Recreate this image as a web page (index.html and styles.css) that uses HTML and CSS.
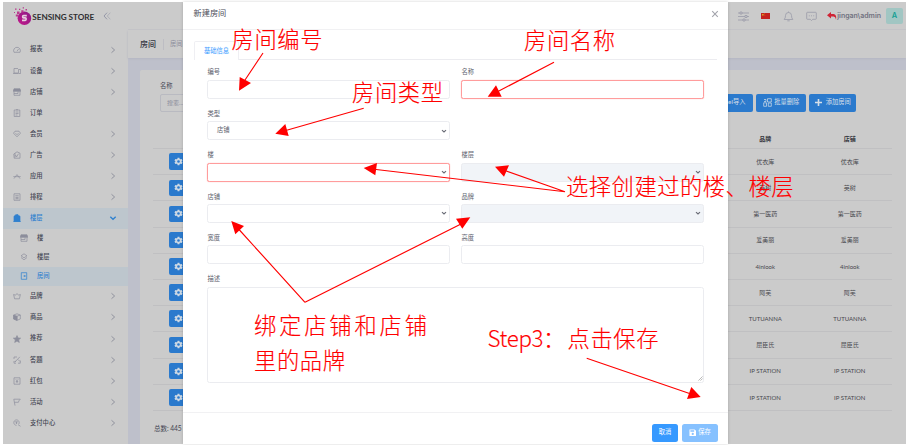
FILE: index.html
```html
<!DOCTYPE html>
<html lang="zh-CN">
<head>
<meta charset="utf-8">
<title>新建房间</title>
<link rel="stylesheet" href="styles.css">
</head>
<body>
<svg class="defs" aria-hidden="true">
  <symbol id="chev" viewBox="0 0 8 8"><path d="M2.5 1.3 5.6 4 2.5 6.7"/></symbol>
  <symbol id="down" viewBox="0 0 8 8"><path d="M1.3 2.8 4 5.3 6.7 2.8"/></symbol>
  <symbol id="gauge" viewBox="0 0 8 8"><path d="M1 6.3A3.4 3.4 0 1 1 7 6.3ZM4 5.2 5.6 3"/></symbol>
  <symbol id="device" viewBox="0 0 8 8"><path d="M5 1.5H1V6H5M0 6.5H5M5.5 2.5H7.6V6.5H5.5Z"/></symbol>
  <symbol id="shop" viewBox="0 0 8 8"><path fill="currentColor" d="M1 .8H7L7.8 3.3H.2Z"/><path d="M1 3.5V7.3H7V3.5M1 5.5H5V3.5"/></symbol>
  <symbol id="order" viewBox="0 0 8 8"><path d="M1.2 1H6.8V7.5H1.2ZM3 .7H5M2.5 3H5.5M2.5 4.5H5.5M2.5 6H4.5"/></symbol>
  <symbol id="gem" viewBox="0 0 8 8"><path d="M2 1.2H6L7.5 3.2 4 6.8.5 3.2ZM2.5 3.2 4 4.7 5.5 3.2"/></symbol>
  <symbol id="ad" viewBox="0 0 8 8"><path d="M.8 3 4 .8 7 2.2V7.2H1.2ZM2.5 4 3.5 6 5.5 2.7M2 2.3V6.5"/></symbol>
  <symbol id="app" viewBox="0 0 8 8"><path d="M.3 4.6H7.7M1 6.6 2.6 4.4 4 2.6 5.4 4.4 7 6.6"/></symbol>
  <symbol id="plan" viewBox="0 0 8 8"><path d="M1 .8H7V7.3H1ZM2.3 2.7H5.7M2.3 4.3H5.7M2.3 5.8H5.7M4 4V6"/></symbol>
  <symbol id="tower" viewBox="0 0 8 8"><path fill="currentColor" d="M1 2.2 2.3 1.6V.9L4.8.4 5.4 1.6 7 2.2V7.5H1Z"/><path d="M.3 7.5H7.8"/></symbol>
  <symbol id="layers" viewBox="0 0 8 8"><path d="M4 .8 7 2.8 4 4.8 1 2.8ZM1 4.5 4 6.8 7 4.5"/></symbol>
  <symbol id="door" viewBox="0 0 8 8"><path d="M1.3.7H6.7V7.3H1.3ZM3.8 4H6M4.7 3.1 3.8 4 4.7 4.9"/></symbol>
  <symbol id="crown" viewBox="0 0 8 8"><path d="M1.6 6.8.6 2.5 2.5 3.2 4 1.5 5.5 3.2 7.4 2.5 6.4 6.8Z"/></symbol>
  <symbol id="box" viewBox="0 0 8 8"><path d="M4 .8 7.3 2V6L4 7.3.7 6V2ZM4 3.2V7.3M4 3.2 7.3 2"/><path fill="currentColor" d="M.7 2 4 3.2V7.3L.7 6Z"/></symbol>
  <symbol id="star" viewBox="0 0 8 8"><path fill="currentColor" d="M4 .6 5 3 7.6 3.2 5.6 4.8 6.3 7.4 4 6 1.7 7.4 2.4 4.8.4 3.2 3 3Z"/></symbol>
  <symbol id="quiz" viewBox="0 0 8 8"><path d="M1 3V1H4M1 5V7.2H3M5 7.2H7.3V4.5M2 6 6.8.9M2 6 2.3 4.8M5 3.5 7 5.5"/></symbol>
  <symbol id="packet" viewBox="0 0 8 8"><path d="M1 .8H7V7.2H1ZM2.8 2.3 4 3.8 5.2 2.3M4 3.8V6M2.8 4.6H5.2"/></symbol>
  <symbol id="flag" viewBox="0 0 8 8"><path d="M2 7.6 .8 1.2H7.3L6 2.7 5.4 4.3H1.5"/></symbol>
  <symbol id="pay" viewBox="0 0 8 8"><path d="M5.8 5A2.7 2.7 0 1 0 3.5 6.3M5 5.6 7.5 7.3M2.5 2 3.5 3.3 4.5 2M3.5 3.3V5M2.6 3.8H4.4"/></symbol>
  <symbol id="gear" viewBox="0 0 10 10"><path fill="currentColor" stroke="none" fill-rule="evenodd" d="M4 .8H6L6.3 2.1 7.2 2.6 8.5 2.2 9.5 3.9 8.5 4.8V5.3L9.5 6.1 8.5 7.8 7.2 7.4 6.3 7.9 6 9.2H4L3.7 7.9 2.8 7.4 1.5 7.8.5 6.1 1.5 5.3V4.8L.5 3.9 1.5 2.2 2.8 2.6 3.7 2.1ZM5 3.5A1.5 1.5 0 1 0 5 6.5 1.5 1.5 0 1 0 5 3.5Z"/></symbol>
</svg>

<div class="app">
  <aside class="side">
    <div class="brand">
      <svg class="mark" viewBox="0 0 18 19"><defs><linearGradient id="g" x1="0" y1="1" x2="1" y2="0"><stop offset="0" stop-color="#c2188a"/><stop offset="1" stop-color="#8b1b87"/></linearGradient></defs>
        <circle cx="10.4" cy="11.8" r="6.8" fill="url(#g)"/>
        <path fill="#b93a8e" d="M3 5H5.5V7.5H3ZM1 2H2.5V3.3H1ZM5 2.2H6.3V3.5H5ZM7.3 3.8H9.5V6H7.3ZM8.7.8H10V2H8.7ZM11.5 2.5H13V4H11.5ZM1.8 8H4.5V10H1.8ZM0 5.5H1V6.5H0Z"/>
        <path fill="none" stroke="#e6d0e0" stroke-width="1.6" d="M12.8 9.1H9.6Q8.6 9.1 8.6 10.2T9.6 11.4H11.2Q12.2 11.4 12.2 12.6T11.2 13.9H8"/></svg>
      <span class="name">SENSING STORE</span>
      <svg class="fold" viewBox="0 0 8 8"><path d="M4 .7 1 4 4 7.3"/><path class="faint" d="M7.3.7 4.3 4 7.3 7.3"/></svg>
    </div>
    <nav>
      <div class="item"><svg><use href="#gauge"/></svg><span>报表</span><svg class="go"><use href="#chev"/></svg></div>
      <div class="item"><svg><use href="#device"/></svg><span>设备</span><svg class="go"><use href="#chev"/></svg></div>
      <div class="item"><svg><use href="#shop"/></svg><span>店铺</span><svg class="go"><use href="#chev"/></svg></div>
      <div class="item"><svg><use href="#order"/></svg><span>订单</span></div>
      <div class="item"><svg><use href="#gem"/></svg><span>会员</span><svg class="go"><use href="#chev"/></svg></div>
      <div class="item"><svg><use href="#ad"/></svg><span>广告</span><svg class="go"><use href="#chev"/></svg></div>
      <div class="item"><svg><use href="#app"/></svg><span>应用</span><svg class="go"><use href="#chev"/></svg></div>
      <div class="item"><svg><use href="#plan"/></svg><span>排程</span><svg class="go"><use href="#chev"/></svg></div>
      <div class="item on"><svg><use href="#tower"/></svg><span>楼层</span><svg class="go"><use href="#down"/></svg></div>
      <div class="item sub"><svg><use href="#shop"/></svg><span>楼</span></div>
      <div class="item sub"><svg><use href="#layers"/></svg><span>楼层</span></div>
      <div class="item sub on"><svg><use href="#door"/></svg><span>房间</span></div>
      <div class="item"><svg><use href="#crown"/></svg><span>品牌</span><svg class="go"><use href="#chev"/></svg></div>
      <div class="item"><svg><use href="#box"/></svg><span>商品</span><svg class="go"><use href="#chev"/></svg></div>
      <div class="item"><svg><use href="#star"/></svg><span>推荐</span><svg class="go"><use href="#chev"/></svg></div>
      <div class="item"><svg><use href="#quiz"/></svg><span>答题</span><svg class="go"><use href="#chev"/></svg></div>
      <div class="item"><svg><use href="#packet"/></svg><span>红包</span><svg class="go"><use href="#chev"/></svg></div>
      <div class="item"><svg><use href="#flag"/></svg><span>活动</span><svg class="go"><use href="#chev"/></svg></div>
      <div class="item"><svg><use href="#pay"/></svg><span>支付中心</span><svg class="go"><use href="#chev"/></svg></div>
    </nav>
  </aside>
  <div class="main">
    <header class="top">
      <svg class="ic" viewBox="0 0 11 11"><path d="M0 2H11M0 5.5H11M0 9H11"/><path class="knob" d="M2 1H4V3H2ZM7 4.5H9V6.5H7ZM5 8H7V10H5Z"/></svg>
      <svg class="cn" viewBox="0 0 9 6"><path fill="#c5221f" d="M0 0H9V6H0Z"/><path fill="#d9a520" d="M1 1H2.6V2.6H1ZM3.4.6H4V1.2H3.4ZM3.6 2H4.2V2.6H3.6Z"/></svg>
      <svg class="ic" viewBox="0 0 11 11"><path d="M1.2 8.5H9.8Q8.5 7 8.5 4.5A3 3 0 0 0 2.5 4.5Q2.5 7 1.2 8.5ZM4.3 9.8H6.7M5.5.5V1.5"/></svg>
      <svg class="ic" viewBox="0 0 11 11"><path d="M1.5 1.3H9.5Q10.3 1.3 10.3 2V7.5Q10.3 8.3 9.5 8.3H6.7L5.5 9.6 4.3 8.3H1.5Q.7 8.3.7 7.5V2Q.7 1.3 1.5 1.3ZM2.8 4.8H3.8M5 4.8H6M7.2 4.8H8.2"/></svg>
      <span class="user"><svg viewBox="0 0 10 8"><path fill="#cf2435" d="M0 3.2 4 0V2H6.5Q10 2.5 9 7.6 8.5 4.8 6.5 4.6H4V6.5Z"/></svg>jingan\admin</span>
      <span class="avatar">A</span>
    </header>
    <div class="crumb"><b>房间</b><span>房间</span></div>
    <section class="card">
      <div class="query">
        <div class="find"><label>名称</label><div class="search">搜索...</div></div>
        <div class="acts">
          <span class="btn wide">Excel导入</span>
          <span class="btn bulk"><svg viewBox="0 0 9 9"><path d="M4.5.7H8.3V4H4.5ZM.7 4.8H3.5V8.3H.7ZM5.3 5H8.3V8.3H5.3ZM1 1.5H3V3.5H1"/></svg>批量删除</span>
          <span class="btn add"><svg viewBox="0 0 9 9"><path class="thick" d="M4.5 1V8M1 4.5H8"/></svg>添加房间</span>
        </div>
      </div>
      <div class="table">
        <div class="row head"><span></span><span></span><span>品牌</span><span>店铺</span></div>
        <div class="row"><i><svg><use href="#gear"/></svg></i><span></span><span>优衣库</span><span>优衣库</span></div>
        <div class="row"><i><svg><use href="#gear"/></svg></i><span></span><span>英树</span><span>英树</span></div>
        <div class="row"><i><svg><use href="#gear"/></svg></i><span></span><span>第一医药</span><span>第一医药</span></div>
        <div class="row"><i><svg><use href="#gear"/></svg></i><span></span><span>爱美丽</span><span>爱美丽</span></div>
        <div class="row"><i><svg><use href="#gear"/></svg></i><span></span><span>4inlook</span><span>4inlook</span></div>
        <div class="row"><i><svg><use href="#gear"/></svg></i><span></span><span>阿芙</span><span>阿芙</span></div>
        <div class="row"><i><svg><use href="#gear"/></svg></i><span></span><span>TUTUANNA</span><span>TUTUANNA</span></div>
        <div class="row"><i><svg><use href="#gear"/></svg></i><span></span><span>屈臣氏</span><span>屈臣氏</span></div>
        <div class="row"><i><svg><use href="#gear"/></svg></i><span></span><span>IP STATION</span><span>IP STATION</span></div>
        <div class="row"><i><svg><use href="#gear"/></svg></i><span></span><span>IP STATION</span><span>IP STATION</span></div>
      </div>
      <div class="total">总数: 445</div>
    </section>
  </div>
</div>

<div class="modal">
  <div class="mhead"><span>新建房间</span><svg viewBox="0 0 8 8"><path d="M1.2 1.2 6.8 6.8M6.8 1.2 1.2 6.8"/></svg></div>
  <div class="mbody">
    <div class="tabs"><span class="tab">基础信息</span></div>
    <div class="form">
      <div class="field"><label>编号</label><div class="ctl"></div></div>
      <div class="field"><label>名称</label><div class="ctl bad"></div></div>
      <div class="field first"><label>类型</label><div class="ctl">店铺<svg><use href="#down"/></svg></div></div>
      <div class="field"><label>楼</label><div class="ctl bad"><svg><use href="#down"/></svg></div></div>
      <div class="field"><label>楼层</label><div class="ctl off"><svg><use href="#down"/></svg></div></div>
      <div class="field"><label>店铺</label><div class="ctl"><svg><use href="#down"/></svg></div></div>
      <div class="field"><label>品牌</label><div class="ctl off"><svg><use href="#down"/></svg></div></div>
      <div class="field"><label>宽度</label><div class="ctl"></div></div>
      <div class="field"><label>高度</label><div class="ctl"></div></div>
      <div class="field full"><label>描述</label><div class="ctl area"><svg viewBox="0 0 6 6"><path d="M.5 5.5 5.5.5M3 5.5 5.5 3"/></svg></div></div>
    </div>
  </div>
  <div class="mfoot">
    <span class="mb cancel">取消</span>
    <span class="mb save"><svg viewBox="0 0 8 8"><path fill="#fff" fill-rule="evenodd" d="M.5.5H6L7.5 2V7.5H.5ZM1.5 1.3V3H5.5V1.3ZM4 4A1.2 1.2 0 1 0 4 6.4 1.2 1.2 0 1 0 4 4Z"/></svg>保存</span>
  </div>
</div>

<svg class="notes" viewBox="0 0 908 445">
  <g class="lines">
    <path d="M263 53 243 83M363.7 108.3 284 131M554 62.3 496 92.5M565 191.7 374 169.3M565 191.7 505 170.5M305 302.3 239 229.5M305 302.3 463 223M586.7 358.3 691 394"/>
  </g>
  <path class="heads" d="M239.7 77 251 83 239 90.7ZM285.3 124 288.7 136 275.3 133.7ZM496 85.3 501.7 96.7H487.7ZM363.7 168 377 163 375.3 175.3ZM495 166.7 509 165.3 504 176.7ZM231.3 221 244 226 235.3 234.3ZM456 218.7 470.3 217.3 462.3 228.7ZM691.3 387 700.7 397 687 399Z"/>
  <text x="231.5" y="47.8" textLength="91">房间编号</text>
  <text x="524" y="48.5" textLength="91">房间名称</text>
  <text x="352" y="101" textLength="91">房间类型</text>
  <text x="566" y="195.2" textLength="227.5">选择创建过的楼、楼层</text>
  <text x="254" y="334" textLength="173">绑定店铺和店铺</text>
  <text x="254" y="369" textLength="91">里的品牌</text>
  <text x="487.5" y="347" textLength="56">Step3</text>
  <text x="543" y="347">：</text>
  <text x="567.5" y="347" textLength="91">点击保存</text>
</svg>
</body>
</html>
```
FILE: styles.css
```css
* { box-sizing: border-box; }
html, body { margin: 0; height: 445px; overflow: hidden; }
body {
  background: #fff;
  padding: 2px 2px 1px 3px;
  font-family: Lato, "Noto Sans CJK SC", sans-serif;
  font-size: 6.3px;
  line-height: 1.4;
  color: #454754;
}
svg { fill: none; stroke: currentColor; stroke-width: .7; flex: none; }
.defs { position: absolute; width: 0; height: 0; }

.app { display: flex; height: 442px; background: #bec0cb; overflow: hidden; }

.side { width: 125px; background: #cbcbcb; flex: none; }
.brand { height: 37px; padding: 4px 0 0 10.5px; display: flex; align-items: flex-start; }
.mark { width: 18px; height: 20px; stroke: none; }
.name { font-size: 8.2px; font-weight: 700; color: #2f2f31; margin: 5.5px 0 0 .8px; width: 71px; white-space: nowrap; letter-spacing: -.05px; }
.fold { width: 8px; height: 8px; margin-top: 6px; color: #9698a8; stroke-width: 1; }
.fold .faint { opacity: .5; }
.item { height: 21.1px; padding: 0 11px 0 10px; display: flex; align-items: center; font-weight: 500; }
.item svg { width: 8px; height: 8px; color: #8d8e9c; }
.item span { margin-left: 9px; padding-top: .6px; }
.item .go { margin-left: auto; color: #8a8c99; stroke-width: .9; }
.item.sub { height: 19px; padding-left: 17px; }
.item.on { background: #bdc6cd; color: #2e80cf; }
.item.on svg { color: #2e80cf; }
.item.on .go { stroke-width: 1.3; }

.main { flex: 1; display: flex; flex-direction: column; min-width: 0; }
.top { height: 28px; background: #cbcbcb; border-bottom: 1px solid #c4c4c8; display: flex; justify-content: flex-end; align-items: center; padding: 1px 3px 0 0; flex: none; }
.top .ic { width: 11px; height: 11px; color: #999ba8; margin-right: 12px; stroke-width: .8; }
.top .knob { fill: #cbcbcb; }
.cn { width: 9px; height: 6px; stroke: none; margin: 0 13px 0 0; }
.user { font-family: Inter, sans-serif; font-weight: 600; font-size: 7px; color: #70717f; display: flex; align-items: center; margin-right: 5px; margin-left: -2px; }
.user svg { width: 10px; height: 8px; stroke: none; }
.avatar { width: 17px; height: 16.5px; border-radius: 2px; background: #a1c6c3; color: #159f94; font-family: Inter, sans-serif; font-weight: 600; font-size: 7.4px; display: flex; align-items: center; justify-content: center; }
.crumb { height: 27.5px; background: #cbcbcb; box-shadow: 0 1px 2px #b5b6c2; display: flex; align-items: center; padding: 2px 0 0 12px; flex: none; color: #8b8d9b; }
.crumb b { font-size: 8px; font-weight: 500; color: #333540; padding-right: 7px; border-right: 1px solid #bdbdc3; }
.crumb span { margin-left: 6px; }

.card { margin: 12px 0 0 12px; flex: 1; background: #cbcbcb; border-radius: 2px 0 0 0; padding: 12.5px 14px 0 13px; }
.query { display: flex; justify-content: space-between; align-items: flex-end; height: 30px; padding: 0 36px 0 7px; }
.search { width: 60px; height: 18px; border: 1px solid #b9bac1; border-radius: 2px; margin-top: 3px; padding: 3.5px 6px; color: #8b8d9b; font-size: 6px; }
.acts { display: flex; gap: 3px; }
.btn { height: 18.5px; border-radius: 2px; background: #2b7acd; color: #d6dfe8; display: flex; align-items: center; justify-content: center; gap: 2.5px; white-space: nowrap; }
.btn svg { width: 9px; height: 9px; }
.btn .thick { stroke-width: 1.6; }
.wide { width: 48px; padding-left: 6px; }
.bulk { width: 50px; }
.add { width: 47px; }

.table { margin-top: 16.5px; }
.row { display: grid; grid-template-columns: 16px 1fr 84.5px 84.5px; height: 26.2px; border-bottom: 1px solid #c0c0c2; align-items: center; text-align: center; font-size: 6px; color: #48484e; }
.row span { padding-top: 1px; }
.row.head { height: 20.5px; font-weight: 700; color: #34353d; }
.row i { margin-left: 16px; width: 22px; height: 16.5px; background: #2b7acd; border-radius: 2px; display: flex; align-items: center; padding-left: 5px; color: #ccd8e4; }
.row i svg { width: 9px; height: 9px; }
.total { margin-top: 13px; font-size: 6.6px; padding-left: 1px; letter-spacing: -.05px; }

.modal { position: absolute; left: 183px; top: 2px; width: 545px; height: 442px; background: #fff; box-shadow: 0 0 3px rgba(0, 0, 0, .18); display: flex; flex-direction: column; color: #60626e; }
.mhead { height: 28px; border-bottom: 1px solid #f1f1f3; display: flex; justify-content: space-between; align-items: center; padding: 0 9.5px 3px 10.5px; font-size: 8.2px; color: #4b4d58; flex: none; }
.mhead svg { width: 8px; height: 8px; color: #a3a4ac; stroke-width: 1.1; }
.mbody { flex: 1; padding: 11px 11px 0; }
.tabs { height: 19px; border-bottom: 1px solid #ececf0; }
.tab { display: flex; align-items: center; justify-content: center; width: 45px; height: 19px; background: #fff; border: 1px solid #efeff3; border-bottom: 0; border-radius: 2px 2px 0 0; color: #3699ff; }
.form { display: grid; grid-template-columns: 243px 243px; column-gap: 11px; padding: 7.6px 0 0 13.4px; }
.field { height: 41.4px; }
.field label { display: block; height: 12.2px; padding-top: .8px; }
.first { grid-column: 1 / 3; width: 243px; }
.ctl { height: 19px; border: 1px solid #ebecf0; border-radius: 2.5px; background: #fff; display: flex; align-items: center; padding: 0 2px 0 8.5px; }
.ctl svg { width: 6px; height: 6px; margin-left: auto; color: #6a6c76; stroke-width: 1.5; }
.bad { border-color: #ff9c9c; box-shadow: 0 0 1px #ff9c9c; }
.off { background: #f1f4f8; }
.full { grid-column: 1 / 3; }
.area { height: 96px; align-items: flex-end; padding: 0 0 1px; }
.area svg { width: 5px; height: 5px; stroke-width: .7; color: #888; }
.mfoot { height: 32px; border-top: 1px solid #f1f1f3; display: flex; justify-content: flex-end; padding: 10.5px 10.5px 0 0; gap: 4px; flex: none; }
.mb { height: 18.5px; border-radius: 2.5px; background: #3699ff; color: #fff; display: flex; align-items: center; justify-content: center; gap: 2px; }
.cancel { width: 26px; }
.save { width: 35.5px; background: #86c1ff; }
.save svg { width: 7.5px; height: 7.5px; stroke: none; }

.notes { position: absolute; left: 0; top: 0; width: 908px; height: 445px; }
.lines { stroke: #f00; stroke-width: 1.15; }
.heads { fill: #f00; stroke: none; }
.notes text { font-family: "Noto Sans CJK SC", sans-serif; font-weight: 300; font-size: 22.3px; fill: #f00; stroke: #f00; stroke-width: .15; }
```
